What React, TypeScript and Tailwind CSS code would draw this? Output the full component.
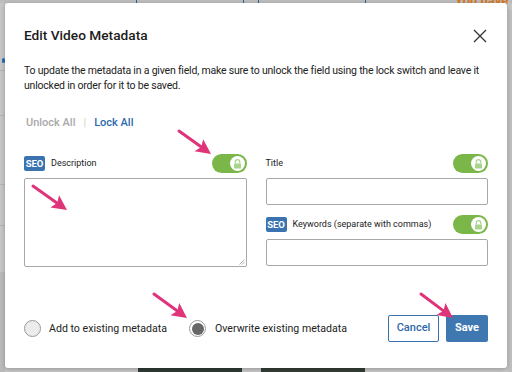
import React from "react";

const PINK = "#e0347a";

function Arrow({ x1, y1, x2, y2 }: { x1: number; y1: number; x2: number; y2: number }) {
  const dx = x2 - x1;
  const dy = y2 - y1;
  const len = Math.sqrt(dx * dx + dy * dy);
  const ux = dx / len;
  const uy = dy / len;
  const hl = 15;
  const hw = 7.5;
  const bx = x2 - ux * hl;
  const by = y2 - uy * hl;
  const px = -uy;
  const py = ux;
  const pts = `${x2},${y2} ${bx + px * hw},${by + py * hw} ${bx + ux * 3},${by + uy * 3} ${bx - px * hw},${by - py * hw}`;
  return (
    <g>
      <line x1={x1} y1={y1} x2={bx + ux * 4} y2={by + uy * 4} stroke={PINK} strokeWidth={3} strokeLinecap="round" />
      <polygon points={pts} fill={PINK} />
    </g>
  );
}

function LockIcon() {
  return (
    <svg width="9" height="10" viewBox="0 0 9 10">
      <path d="M2.2 4.5V3a2.3 2.3 0 0 1 4.6 0v1.5" fill="none" stroke="#a8d48c" strokeWidth="1.2" />
      <rect x="1" y="4.5" width="7" height="5" rx="0.8" fill="#a8d48c" />
    </svg>
  );
}

function Toggle() {
  return (
    <div className="w-[35px] h-[19px] rounded-full bg-[#7ab648] flex items-center justify-end pr-[2px]">
      <div className="w-[15px] h-[15px] rounded-full bg-white flex items-center justify-center">
        <LockIcon />
      </div>
    </div>
  );
}

function Seo() {
  return (
    <span className="w-[21px] h-[15px] rounded-[2px] bg-[#3a73b0] text-white text-[9.5px] font-bold flex items-center justify-center leading-none">
      SEO
    </span>
  );
}

function LabelRow({ seo, label }: { seo?: boolean; label: string }) {
  return (
    <div className="h-[19px] flex items-center justify-between">
      <div className="flex items-center gap-[6px]">
        {seo && <Seo />}
        <span className="text-[9px] text-[#222] leading-none">{label}</span>
      </div>
      <Toggle />
    </div>
  );
}

export default function App() {
  return (
    <div
      className="relative w-[512px] h-[372px] overflow-hidden bg-[#c6c6c6]"
      style={{ fontFamily: "Roboto, 'Liberation Sans', sans-serif" }}
    >
      {/* obscured page behind */}
      <div className="absolute inset-0 pointer-events-none">
        <div className="absolute left-0 top-0 w-[512px] h-[3px] bg-[#bdbdbd]" />
        <div className="absolute left-[136px] top-0 w-[1px] h-[4px] bg-[#2c5f9a]" />
        <div className="absolute left-[243px] top-0 w-[1px] h-[4px] bg-[#2c5f9a]" />
        <div className="absolute left-[258px] top-0 w-[1px] h-[4px] bg-[#2c5f9a]" />
        <div className="absolute left-[365px] top-0 w-[1px] h-[4px] bg-[#2c5f9a]" />
        <div className="absolute left-[455px] top-[-9px] text-[13px] font-bold text-[#d9781e] whitespace-nowrap">You have s</div>
        <div className="absolute left-[2px] top-[58px] w-[3px] h-[5px] rounded-full bg-[#2b6cb3]" />
        <div className="absolute left-0 top-[70px] w-[5px] h-[1px] bg-[#b4b4b4]" />
        <div className="absolute left-0 top-[115px] w-[5px] h-[1px] bg-[#b4b4b4]" />
        <div className="absolute left-0 top-[184px] w-[5px] h-[1px] bg-[#b4b4b4]" />
        <div className="absolute left-0 top-[225px] w-[5px] h-[1px] bg-[#b4b4b4]" />
        <div className="absolute left-0 top-[272px] w-[5px] h-[100px] bg-[#bababa]" />
        <div className="absolute left-[138px] top-[367px] w-[104px] h-[5px] bg-[#2f3a34]" />
        <div className="absolute left-[261px] top-[367px] w-[104px] h-[5px] bg-[#343c36]" />
        <div className="absolute left-[508px] top-[10px] w-[4px] h-[362px] bg-[#bfbfbf]" />
      </div>

      <div className="relative pl-[5px] pt-[3px]">
        <div className="w-[502px] h-[365px] bg-white rounded-[3px] shadow-[0_1px_4px_rgba(0,0,0,0.25)] px-[19px] pt-[23px] flex flex-col">
          <div className="flex items-center justify-between h-[20px]">
            <h1 className="text-[13.7px] font-medium text-[#1c1c1c] leading-none">Edit Video Metadata</h1>
            <svg width="14" height="14" viewBox="0 0 14 14" className="mr-[1px]">
              <path d="M1 1L13 13M13 1L1 13" stroke="#333" strokeWidth="1.3" />
            </svg>
          </div>
          <p className="mt-[17px] text-[10.5px] leading-[15px] text-[#222] tracking-[-0.2px] whitespace-nowrap">
            To update the metadata in a given field, make sure to unlock the field using the lock switch and leave it
            <br />
            unlocked in order for it to be saved.
          </p>
          <div className="mt-[23px] h-[15px] flex items-center text-[11px] font-medium pl-[2px]">
            <span className="text-[#a9a9a9]">Unlock All</span>
            <span className="text-[#d2d2d2] mx-[8px] font-normal">|</span>
            <span className="text-[#2c6aae]">Lock All</span>
          </div>
          <div className="mt-[23px] grid grid-cols-2 gap-x-[19px]">
            <div className="flex flex-col">
              <LabelRow seo label="Description" />
              <div className="mt-[5px] h-[89px] border border-[#a8a8a8] rounded-[2px] relative">
                <svg width="6" height="6" viewBox="0 0 6 6" className="absolute right-[1px] bottom-[1px]">
                  <path d="M5.5 0.5L0.5 5.5M5.5 3L3 5.5" stroke="#999" strokeWidth="0.8" />
                </svg>
              </div>
            </div>
            <div className="flex flex-col">
              <LabelRow label="Title" />
              <div className="mt-[5px] h-[27px] border border-[#a8a8a8] rounded-[2px]" />
              <div className="mt-[10px]">
                <LabelRow seo label="Keywords (separate with commas)" />
              </div>
              <div className="mt-[5px] h-[27px] border border-[#a8a8a8] rounded-[2px]" />
            </div>
          </div>
          <div className="mt-[48px] flex items-center justify-between">
            <div className="flex items-center text-[10.6px] text-[#222]">
              <span className="w-[17px] h-[17px] rounded-full border border-[#9a9a9a] bg-[#ececec]" />
              <span className="ml-[8px]">Add to existing metadata</span>
              <span className="ml-[22px] w-[17px] h-[17px] rounded-full border border-[#9a9a9a] bg-white flex items-center justify-center">
                <span className="w-[12px] h-[12px] rounded-full bg-[#676767]" />
              </span>
              <span className="ml-[9px]">Overwrite existing metadata</span>
            </div>
            <div className="flex items-center gap-[7px]">
              <button className="w-[51px] h-[27px] border border-[#3a73b0] rounded-[2px] bg-white text-[#2f68a8] text-[11px] font-medium">
                Cancel
              </button>
              <button className="w-[42px] h-[27px] rounded-[2px] bg-[#3f78b1] text-white text-[11px] font-bold">
                Save
              </button>
            </div>
          </div>
        </div>
      </div>

      <svg className="absolute inset-0 pointer-events-none" width="512" height="372" viewBox="0 0 512 372">
        <Arrow x1={179} y1={131} x2={211} y2={154} />
        <Arrow x1={33} y1={186} x2={67} y2={210} />
        <Arrow x1={154} y1={294} x2={187} y2={318} />
        <Arrow x1={421} y1={294} x2={453} y2={318} />
      </svg>
    </div>
  );
}
